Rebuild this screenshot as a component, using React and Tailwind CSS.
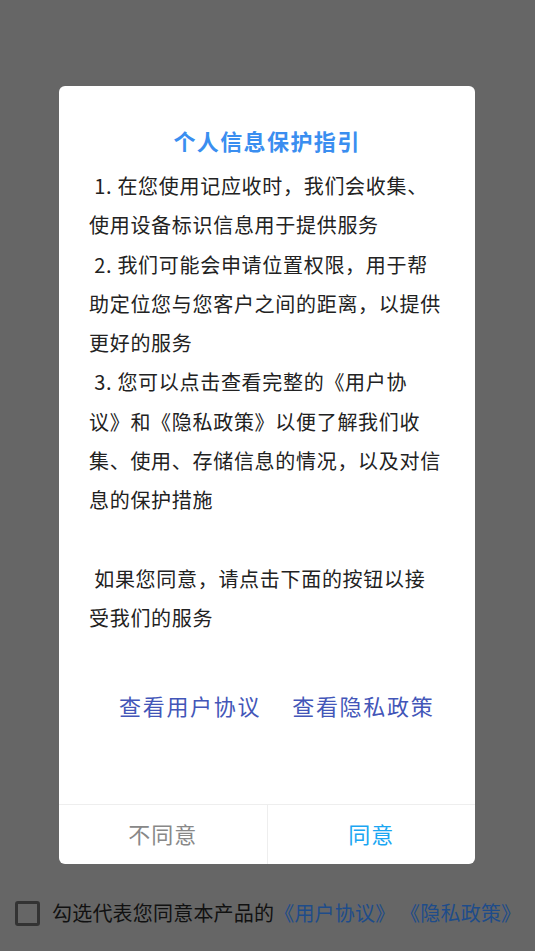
export default function App() {
  const font = { fontFamily: '"Noto Sans CJK SC", "Noto Sans", sans-serif' };
  const lines = [
    "\u00a01. 在您使用记应收时，我们会收集、",
    "使用设备标识信息用于提供服务",
    "\u00a02. 我们可能会申请位置权限，用于帮",
    "助定位您与您客户之间的距离，以提供",
    "更好的服务",
    "\u00a03. 您可以点击查看完整的《用户协",
    "议》和《隐私政策》以便了解我们收",
    "集、使用、存储信息的情况，以及对信",
    "息的保护措施",
    "\u00a0",
    "\u00a0如果您同意，请点击下面的按钮以接",
    "受我们的服务",
  ];
  return (
    <div className="w-[535px] h-[951px] bg-[#666666] flex flex-col overflow-hidden font-['Noto_Sans_CJK_SC',sans-serif]" style={font}>
      <div className="mt-[86px] ml-[59px] w-[416px] h-[778px] bg-white rounded-[6px] flex flex-col overflow-hidden">
        <div className="pt-[38px] h-[70px] text-center text-[22px] leading-[32px] font-bold tracking-[1.4px] text-[#3a8ef0]">
          个人信息保护指引
        </div>
        <div className="mt-[10px] pl-[30px] text-[20px] leading-[39.3px] tracking-[0.7px] text-[#222222]">
          {lines.map((l, i) => (
            <div key={i} className="whitespace-pre h-[39.3px]">{l}</div>
          ))}
        </div>
        <div className="mt-[51px] flex pl-[60px] gap-[31px] text-[22px] leading-[32px] tracking-[1.7px] text-[#4356b8]">
          <span>查看用户协议</span>
          <span>查看隐私政策</span>
        </div>
        <div className="flex-1" />
        <div className="h-[60px] border-t border-[#eeeeee] flex">
          <div className="flex-1 flex items-center justify-center text-[22px] tracking-[1px] text-[#888888] border-r border-[#eeeeee] pb-[2px]">
            不同意
          </div>
          <div className="flex-1 flex items-center justify-center text-[22px] tracking-[1px] text-[#1aa6f2] pb-[2px]">
            同意
          </div>
        </div>
      </div>
      <div className="mt-[35px] flex items-center pl-[15px]">
        <div className="w-[25px] h-[25px] border-[3px] border-[#333333] rounded-[3px]" />
        <div className="ml-[12px] text-[20px] leading-[28px] tracking-[0.2px] text-[#111111] whitespace-pre">
          勾选代表您同意本产品的<span className="text-[#1e4c8a]">{"《用户协议》 《隐私政策》"}</span>
        </div>
      </div>
    </div>
  );
}
